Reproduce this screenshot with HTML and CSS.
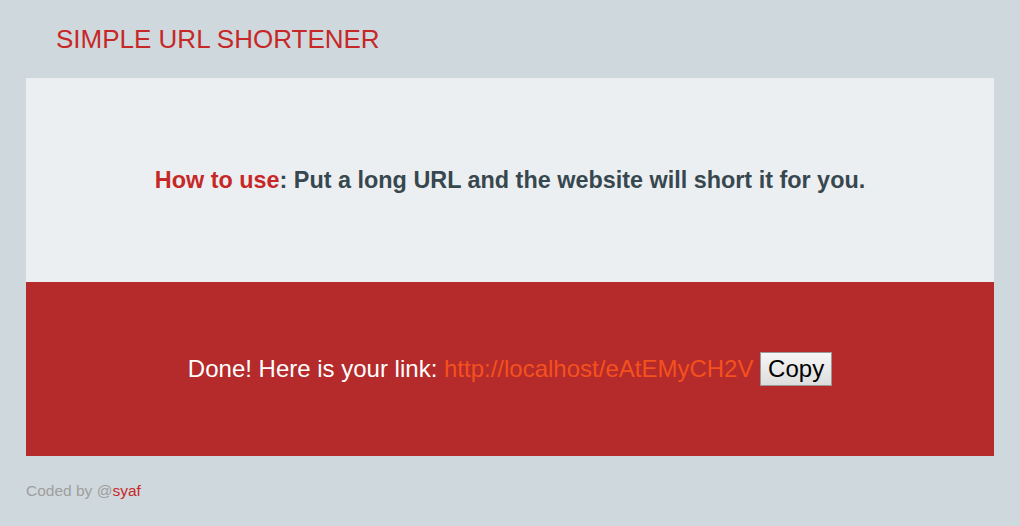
FILE: index.html
```html
<!doctype html>
<html>
<head>
  <link rel="stylesheet" href="styles.css">
</head>
<body>
<div class="b-page">
  <h1 class="b-page_title">SIMPLE URL SHORTENER</h1>
  <div class="b-box">
    <div class="b-box_help">
      <p><span class="b-box_label">How to use</span>: Put a long URL and the website will short it for you.</p>
    </div>
    <div class="b-box_result">
      <p>Done! Here is your link: <a class="b-box_link" href="#">http://localhost/eAtEMyCH2V</a> <button class="b-box_copy" type="button">Copy</button></p>
    </div>
  </div>
  <p class="b-page_footer">Coded by @<a href="#">syaf</a></p>
</div>
</body>
</html>
```
FILE: styles.css
```css
html, body {
  margin : 0;
  padding : 0;
  background : #cfd8dc;
  font-family: "Liberation Sans", Arial, sans-serif;
}
.b-page {
  padding : 0 26px;
}
.b-page_title {
  margin : 0;
  padding : 22px 30px 22px;
  font-size : 26px;
  font-weight : normal;
  line-height : 34px;
  color : #c62828;
}
.b-box_help {
  background : #eceff1;
  height : 204px;
  display : flex;
  align-items : center;
  justify-content : center;
}
.b-box_help p {
  margin : 0;
  font-size : 23.4px;
  font-weight : bold;
  color : #37474f;
}
.b-box_label {
  color : #c62828;
}
.b-box_result {
  background : #b52a2a;
  height : 174px;
  display : flex;
  align-items : center;
  justify-content : center;
}
.b-box_result p {
  margin : 0;
  font-size : 24px;
  color : #fff;
}
.b-box_link {
  color : #f4511e;
  text-decoration : none;
}
.b-box_copy {
  font-family: "Liberation Sans", Arial, sans-serif;
  font-size : 24px;
  padding : 2px 7px;
  color : #000;
  background : linear-gradient(#f6f6f6, #dddddd);
  border : 1px solid #999;
  border-radius : 0;
}
.b-page_footer {
  margin : 0;
  padding : 26px 0;
  font-size : 15.5px;
  color : #9e9e9e;
}
.b-page_footer a {
  color : #c62828;
  text-decoration : none;
}
```
